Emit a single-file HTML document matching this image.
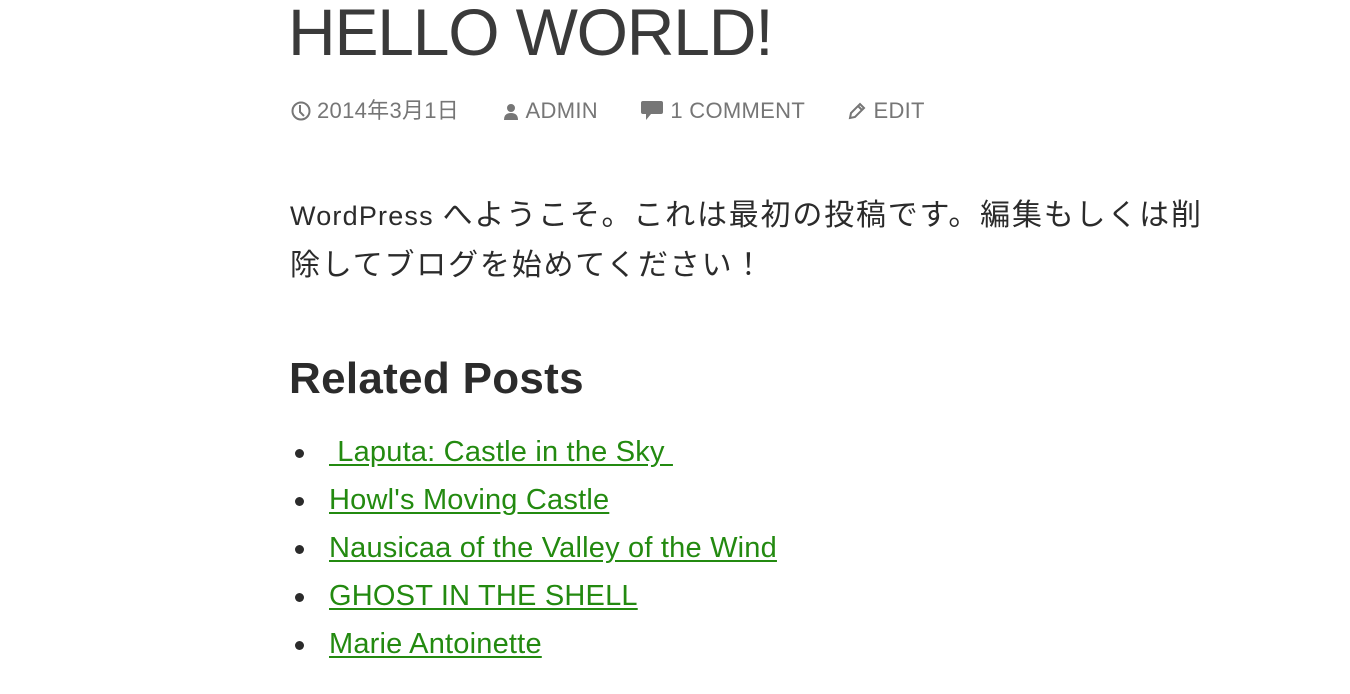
<!DOCTYPE html>
<html><head><meta charset="utf-8"><style>
body{margin:0;background:#fff;width:1350px;height:694px;overflow:hidden;font-family:"Liberation Sans","Noto Sans CJK JP",sans-serif;color:#2b2b2b}
h1{position:absolute;left:288px;top:-6px;margin:0;font-weight:normal;font-size:66px;letter-spacing:-1.2px;white-space:nowrap;color:#3a3a3a}
.meta{position:absolute;left:291px;top:93px;font-size:22px;color:#767676;white-space:nowrap;letter-spacing:0.3px}
.meta span{display:inline-block;margin-right:36px}
.meta svg{vertical-align:-3px;margin-right:6px}
p{position:absolute;left:290px;top:191px;margin:0;width:1000px;font-size:30px;line-height:49px;letter-spacing:1.8px;white-space:nowrap}
p .l{letter-spacing:1.2px;font-size:27px}
h2{position:absolute;left:289px;top:354px;margin:0;font-size:44px;letter-spacing:0.3px}
ul{position:absolute;left:290px;top:428px;margin:0;padding:0;list-style:none;font-size:29px;line-height:48px;letter-spacing:0.2px}
li{position:relative;padding-left:39px}
li:before{content:"";position:absolute;left:5px;top:21px;width:9px;height:9px;border-radius:50%;background:#2b2b2b}
a{color:#238a10;text-decoration:underline;text-underline-offset:3px}
</style></head><body>
<h1>HELLO WORLD!</h1>
<div class="meta">
<span><svg width="20" height="20" viewBox="0 0 20 20"><circle cx="10" cy="10" r="8.5" fill="none" stroke="#767676" stroke-width="2"/><path d="M9 4v7l4 4" fill="none" stroke="#767676" stroke-width="2"/></svg>2014年3月1日</span>
<span><svg width="18" height="18" viewBox="0 0 18 18"><circle cx="9" cy="5" r="4" fill="#767676"/><path d="M2 17q0-7 7-7t7 7z" fill="#767676"/></svg>ADMIN</span>
<span><svg width="24" height="22" viewBox="0 0 24 22"><path d="M3 2h18a2 2 0 0 1 2 2v9a2 2 0 0 1-2 2H11l-5 6v-6H3a2 2 0 0 1-2-2V4a2 2 0 0 1 2-2z" fill="#767676"/></svg>1 COMMENT</span>
<span><svg width="20" height="20" viewBox="0 0 20 20"><path d="M3 17l1-5L13 3l4 4-9 9zM11 5l4 4" fill="none" stroke="#767676" stroke-width="2"/></svg>EDIT</span>
</div>
<p><span class="l">WordPress </span>へようこそ。これは最初の投稿です。編集もしくは削<br>除してブログを始めてください！</p>
<h2>Related Posts</h2>
<ul>
<li><a>&nbsp;Laputa: Castle in the Sky&nbsp;</a></li>
<li><a>Howl's Moving Castle</a></li>
<li><a>Nausicaa of the Valley of the Wind</a></li>
<li><a>GHOST IN THE SHELL</a></li>
<li><a>Marie Antoinette</a></li>
</ul>
</body></html>
